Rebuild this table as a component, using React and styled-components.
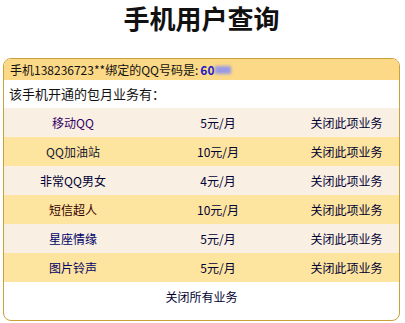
import React from "react";
import styled, { createGlobalStyle } from "styled-components";

const GlobalStyle = createGlobalStyle`
    body {
        margin: 0;
        background: #ffffff;
        font-family: "Noto Sans CJK SC", "DejaVu Sans", sans-serif;
    }
`

const services = [
    { name: "移动QQ", price: "5元/月", color: "#330066" },
    { name: "QQ加油站", price: "10元/月", color: "#1a1a33" },
    { name: "非常QQ男女", price: "4元/月", color: "#000033" },
    { name: "短信超人", price: "10元/月", color: "#330000" },
    { name: "星座情缘", price: "5元/月", color: "#000066" },
    { name: "图片铃声", price: "5元/月", color: "#000066" },
]

const App = () => {
    return (
        <Page>
            <GlobalStyle />
            <Title>手机用户查询</Title>
            <ResultBox>
                <BoxHeader>
                    手机138236723**绑定的QQ号码是:<QQNumber>60</QQNumber><Masked />
                </BoxHeader>
                <Intro>该手机开通的包月业务有：</Intro>
                {services.map((s, i) => (
                    <ServiceRow key={s.name} $odd={i % 2 === 1}>
                        <Cell style={{ color: s.color }}>{s.name}</Cell>
                        <Cell>{s.price}</Cell>
                        <Cell>关闭此项业务</Cell>
                    </ServiceRow>
                ))}
                <Footer>关闭所有业务</Footer>
            </ResultBox>
        </Page>
    )
}

const Page = styled.div`
    width: 405px;
    padding: 0 5px 0 3px;
    box-sizing: border-box;
`

const Title = styled.h1`
    margin: 0 0 24px 0;
    padding-top: 1px;
    height: 33px;
    line-height: 33px;
    text-align: center;
    font-size: 26px;
    font-weight: bold;
    color: #111111;
`

const ResultBox = styled.div`
    border: 1px solid #c9a13c;
    border-radius: 8px;
    overflow: hidden;
    background: #ffffff;
    font-size: 12px;
    color: #111111;
`

const BoxHeader = styled.div`
    height: 21px;
    line-height: 21px;
    padding-left: 6px;
    background: #fcd986;
    display: flex;
    align-items: center;
`

const QQNumber = styled.span`
    color: #1a1acc;
    font-weight: bold;
    margin-left: 2px;
`

const Masked = styled.span`
    display: inline-block;
    width: 16px;
    height: 8px;
    margin-left: 1px;
    background: #9a9ae6;
    filter: blur(1.5px);
`

const Intro = styled.div`
    height: 28px;
    line-height: 28px;
    padding-left: 5px;
    font-size: 13px;
`

const ServiceRow = styled.div`
    display: grid;
    grid-template-columns: 138px 152px 1fr;
    height: 29px;
    align-items: center;
    background: ${(p) => (p.$odd ? "#fde49f" : "#f9efe3")};
    color: #000033;
`

const Cell = styled.div`
    text-align: center;
`

const Footer = styled.div`
    height: 30px;
    line-height: 30px;
    margin-bottom: 8px;
    text-align: center;
    color: #000033;
`

export default App
